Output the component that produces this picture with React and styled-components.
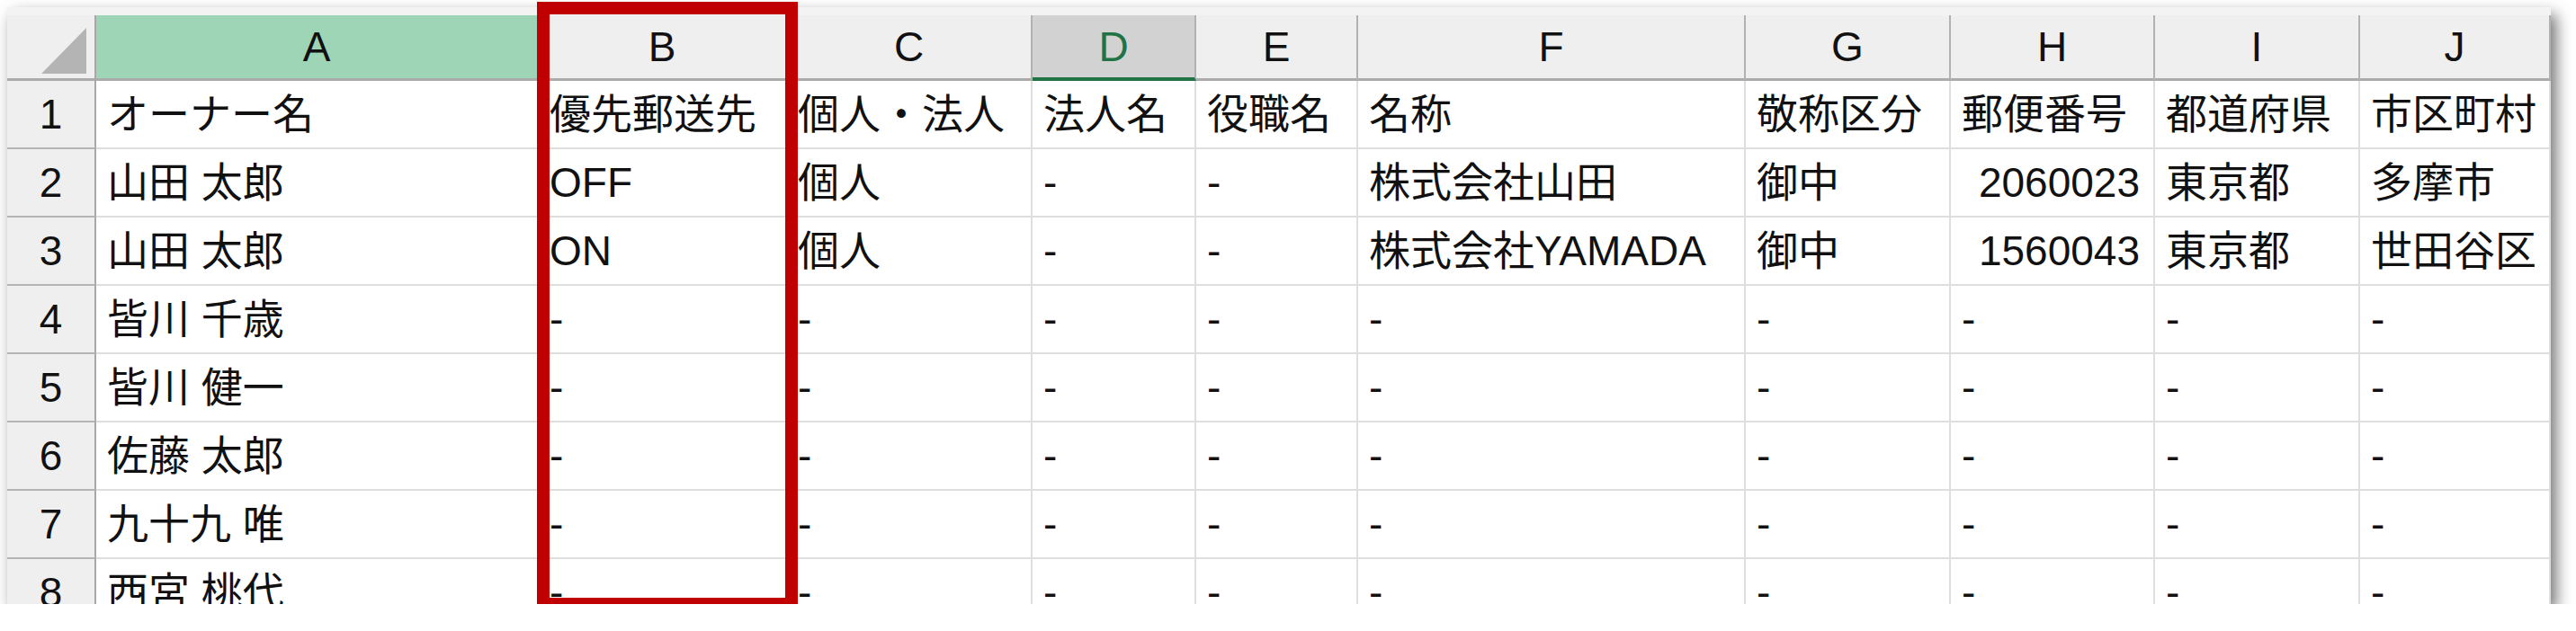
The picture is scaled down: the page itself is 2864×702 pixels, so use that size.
import styled, { createGlobalStyle } from "styled-components";

const GlobalStyle = createGlobalStyle`
  body {
    margin: 0;
    background: #ffffff;
  }
`;

const COLS = [492, 276, 273, 182, 180, 431, 228, 227, 228, 212];
const LETTERS = ["A", "B", "C", "D", "E", "F", "G", "H", "I", "J"];
const TEMPLATE = `99px ${COLS.map((w) => `${w}px`).join(" ")}`;

const rows = [
  ["オーナー名", "優先郵送先", "個人・法人", "法人名", "役職名", "名称", "敬称区分", "郵便番号", "都道府県", "市区町村"],
  ["山田 太郎", "OFF", "個人", "-", "-", "株式会社山田", "御中", "2060023", "東京都", "多摩市"],
  ["山田 太郎", "ON", "個人", "-", "-", "株式会社YAMADA", "御中", "1560043", "東京都", "世田谷区"],
  ["皆川 千歳", "-", "-", "-", "-", "-", "-", "-", "-", "-"],
  ["皆川 健一", "-", "-", "-", "-", "-", "-", "-", "-", "-"],
  ["佐藤 太郎", "-", "-", "-", "-", "-", "-", "-", "-", "-"],
  ["九十九 唯", "-", "-", "-", "-", "-", "-", "-", "-", "-"],
  ["西宮 桃代", "-", "-", "-", "-", "-", "-", "-", "-", "-"],
];

const Page = styled.div`
  padding: 8px 0 0 8px;
  font-family: "Liberation Sans", "Noto Sans CJK JP", sans-serif;
`;

const Frame = styled.div`
  position: relative;
  width: 2828px;
  height: 664px;
`;

const Sheet = styled.div`
  width: 100%;
  height: 100%;
  overflow: hidden;
  background: #ffffff;
  box-shadow: 6px 8px 16px rgba(0, 0, 0, 0.55);
`;

const TopStrip = styled.div`
  height: 9px;
  background: #f3f3f3;
`;

const Row = styled.div`
  display: grid;
  grid-template-columns: ${TEMPLATE};
  height: ${(p) => (p.$header ? 73 : 76)}px;
`;

const Corner = styled.div`
  display: flex;
  justify-content: flex-end;
  align-items: flex-end;
  padding: 0 9px 5px 0;
  background: #efefef;
  border-right: 2px solid #a8a8a8;
  border-bottom: 3px solid #ababab;
`;

const ColHead = styled.div`
  display: flex;
  align-items: center;
  justify-content: center;
  font-size: 46px;
  line-height: 1;
  color: ${(p) => (p.$active ? "#217346" : "#111111")};
  background: ${(p) => (p.$selected ? "#9fd5b7" : p.$active ? "#d2d2d2" : "#efefef")};
  border-right: 2px solid #b2b2b2;
  border-bottom: ${(p) => (p.$active ? "4px solid #217346" : "3px solid #ababab")};
  padding-top: ${(p) => (p.$active ? 1 : 0)}px;
`;

const RowHead = styled.div`
  display: flex;
  align-items: center;
  justify-content: center;
  font-size: 46px;
  line-height: 1;
  color: #111111;
  background: #efefef;
  border-right: 2px solid #a8a8a8;
  border-bottom: 2px solid #b4b4b4;
`;

const Cell = styled.div`
  display: flex;
  align-items: center;
  justify-content: ${(p) => (p.$right ? "flex-end" : "flex-start")};
  padding: 0 15px 0 12px;
  font-size: 46px;
  line-height: 1;
  color: #111111;
  white-space: nowrap;
  overflow: hidden;
  border-right: 2px solid #dedede;
  border-bottom: 2px solid #dedede;
`;

const RedBox = styled.div`
  position: absolute;
  left: 589px;
  top: -6px;
  width: 290px;
  height: 677px;
  box-sizing: border-box;
  border: 14px solid #c00000;
  pointer-events: none;
`;

function CornerTriangle() {
  return (
    <svg width="50" height="51" viewBox="0 0 50 51">
      <polygon points="0,51 50,0 50,51" fill="#b4b4b4" />
    </svg>
  );
}

export default function App() {
  return (
    <Page>
      <GlobalStyle />
      <Frame>
        <Sheet>
          <TopStrip />
          <Row $header>
            <Corner>
              <CornerTriangle />
            </Corner>
            {LETTERS.map((l) => (
              <ColHead key={l} $selected={l === "A"} $active={l === "D"}>
                {l}
              </ColHead>
            ))}
          </Row>
          {rows.map((r, i) => (
            <Row key={i}>
              <RowHead>{i + 1}</RowHead>
              {r.map((v, j) => (
                <Cell key={j} $right={/^\d+$/.test(v)}>
                  {v}
                </Cell>
              ))}
            </Row>
          ))}
        </Sheet>
        <RedBox />
      </Frame>
    </Page>
  );
}
